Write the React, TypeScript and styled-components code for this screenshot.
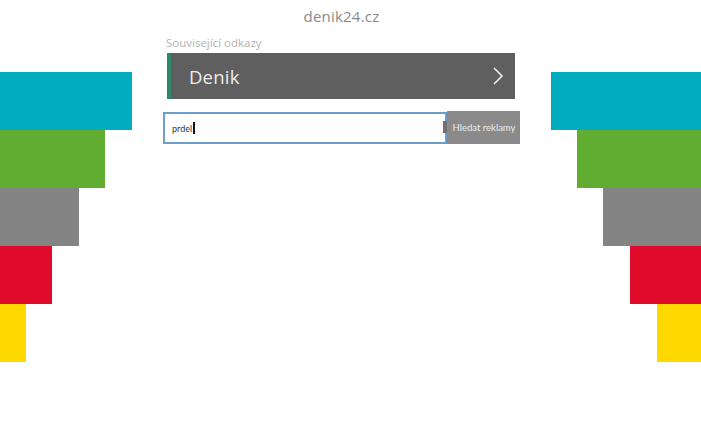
import React from "react";
import styled, { createGlobalStyle } from "styled-components";

const Global = createGlobalStyle`
  html, body { margin: 0; padding: 0; background: #ffffff; }
  body { font-family: "Open Sans", "Liberation Sans", sans-serif; }
`;

const Page = styled.div`
  display: flex;
  justify-content: space-between;
  width: 701px;
  height: 439px;
  overflow: hidden;
`;

const Stack = styled.div<{ $side: "left" | "right" }>`
  display: flex;
  flex-direction: column;
  align-items: ${(p) => (p.$side === "left" ? "flex-start" : "flex-end")};
  width: ${(p) => (p.$side === "left" ? "132px" : "150px")};
  padding-top: 72px;
`;

const Bar = styled.div<{ $w: number; $c: string }>`
  width: ${(p) => p.$w}px;
  height: 58px;
  background: ${(p) => p.$c};
`;

const Center = styled.main`
  flex: 1;
  display: flex;
  flex-direction: column;
  padding: 0 31px;
`;

const Title = styled.h1`
  margin: 0;
  padding-top: 6px;
  text-align: center;
  font-size: 15px;
  font-weight: 400;
  line-height: 20px;
  color: #8a8a8a;
  letter-spacing: 0.2px;
`;

const Label = styled.div`
  margin: 9px 0 0 3px;
  font-size: 11.5px;
  line-height: 15px;
  color: #b2b2b2;
`;

const LinkBox = styled.a`
  margin: 3px 0 0 4px;
  width: 348px;
  height: 46px;
  box-sizing: border-box;
  display: flex;
  align-items: center;
  justify-content: space-between;
  padding: 0 11px 0 18px;
  background: #5f5f5f;
  border-left: 4px solid #2b8a6b;
  color: #ececec;
  font-size: 18.5px;
  letter-spacing: 0.2px;
  text-decoration: none;
`;

const SearchRow = styled.div`
  display: flex;
  align-items: flex-start;
  margin-top: 12px;
`;

const Field = styled.div`
  width: 284px;
  height: 32px;
  margin-top: 1px;
  box-sizing: border-box;
  border: 2px solid #6f9dcb;
  background: #fff;
  display: flex;
  align-items: center;
  padding-left: 7px;
  font-family: Lato, "Liberation Sans", sans-serif;
  font-size: 9px;
  color: #333;
`;

const Caret = styled.span`
  display: inline-block;
  width: 1.5px;
  height: 12px;
  margin-left: 1px;
  background: #111;
`;

const Button = styled.button`
  position: relative;
  width: 73px;
  height: 33px;
  border: none;
  padding: 0 0 0 1px;
  background: #8a8a8a;
  color: #eaeaea;
  font-family: Lato, "Liberation Sans", sans-serif;
  font-size: 9.5px;
  white-space: nowrap;
  &::before {
    content: "";
    position: absolute;
    left: -4px;
    top: 10px;
    width: 4px;
    height: 12px;
    background: #727272;
  }
`;

const left = [
  { w: 132, c: "#00acbd" },
  { w: 105, c: "#60ad32" },
  { w: 79, c: "#848484" },
  { w: 52, c: "#e00b2a" },
  { w: 26, c: "#ffd800" },
];
const right = [
  { w: 150, c: "#00acbd" },
  { w: 124, c: "#60ad32" },
  { w: 98, c: "#848484" },
  { w: 71, c: "#e00b2a" },
  { w: 44, c: "#ffd800" },
];

export default function App() {
  return (
    <>
      <Global />
      <Page>
        <Stack $side="left">
          {left.map((b, i) => (
            <Bar key={i} $w={b.w} $c={b.c} />
          ))}
        </Stack>
        <Center>
          <Title>denik24.cz</Title>
          <Label>Související odkazy</Label>
          <LinkBox href="#">
            <span>Denik</span>
            <svg width="12" height="20" viewBox="0 0 12 20">
              <path d="M2 2 L10 10 L2 18" fill="none" stroke="#eeeeee" strokeWidth="1.6" />
            </svg>
          </LinkBox>
          <SearchRow>
            <Field>
              prdel
              <Caret />
            </Field>
            <Button>Hledat reklamy</Button>
          </SearchRow>
        </Center>
        <Stack $side="right">
          {right.map((b, i) => (
            <Bar key={i} $w={b.w} $c={b.c} />
          ))}
        </Stack>
      </Page>
    </>
  );
}
